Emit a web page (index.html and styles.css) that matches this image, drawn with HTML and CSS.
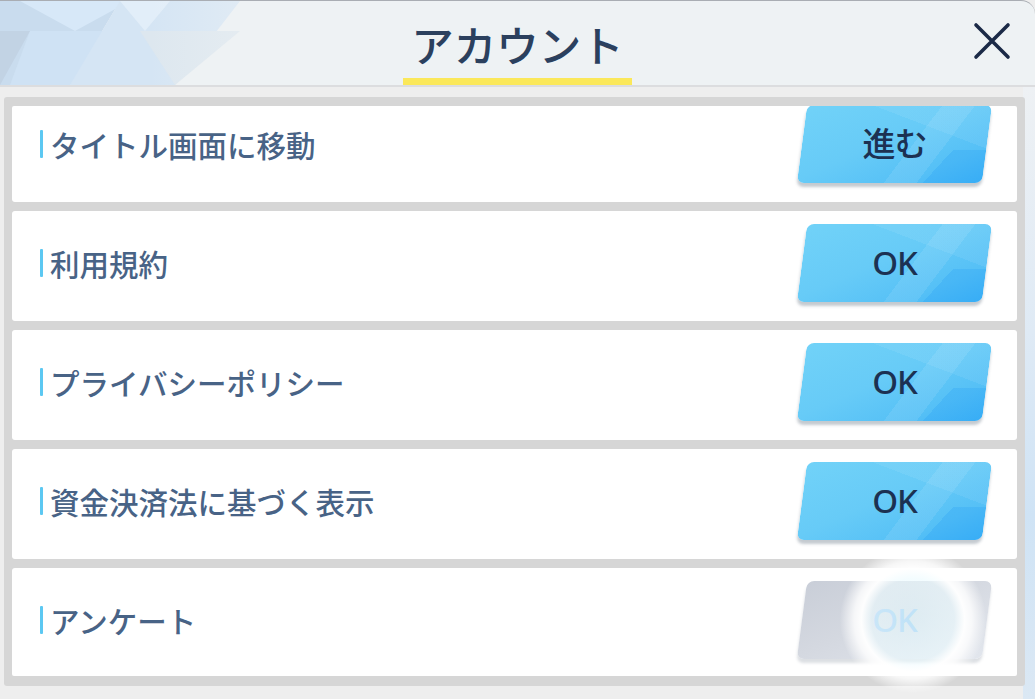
FILE: index.html
```html
<!DOCTYPE html>
<html lang="ja">
<head>
<meta charset="utf-8">
<link rel="stylesheet" href="styles.css">
</head>
<body>
<div class="screen">
  <header class="header">
    <svg class="header-deco" width="360" height="84" viewBox="0 0 360 84">
      <defs>
        <linearGradient id="fade" x1="0" y1="0" x2="1" y2="0">
          <stop offset="0" stop-color="#eef2f4" stop-opacity="0"/>
          <stop offset="1" stop-color="#eef2f4" stop-opacity="1"/>
        </linearGradient>
      </defs>
      <polygon points="0,0 120,0 70,84 0,84" fill="#c9dcee"/>
      <polygon points="20,0 130,0 75,30" fill="#d7e8f8"/>
      <polygon points="30,30 150,30 70,84 10,84" fill="#cfe2f4"/>
      <polygon points="120,0 240,0 175,84 70,84" fill="#d5e5f4"/>
      <polygon points="140,30 240,30 175,84" fill="#dde7ef"/>
      <polygon points="120,0 170,0 145,30" fill="#e2eef9"/>
      <polygon points="0,30 30,30 0,84" fill="#bfcfdf" opacity="0.7"/>
      <rect x="150" y="0" width="210" height="84" fill="url(#fade)"/>
    </svg>
    <h1 class="title">アカウント</h1>
    <button class="close" aria-label="閉じる">
      <svg width="40" height="40" viewBox="0 0 40 40">
        <path d="M4 4 L36 36 M36 4 L4 36" stroke="#1b2a47" stroke-width="3.6" stroke-linecap="round" fill="none"/>
      </svg>
    </button>
  </header>
  <main class="body">
    <div class="side-deco"></div>
    <section class="panel">
      <div class="viewport">
        <ul class="list">
          <li class="row">
            <span class="label">タイトル画面に移動</span>
            <button class="btn"><span class="btn-text">進む</span></button>
          </li>
          <li class="row">
            <span class="label">利用規約</span>
            <button class="btn"><span class="btn-text">OK</span></button>
          </li>
          <li class="row">
            <span class="label">プライバシーポリシー</span>
            <button class="btn"><span class="btn-text">OK</span></button>
          </li>
          <li class="row">
            <span class="label">資金決済法に基づく表示</span>
            <button class="btn"><span class="btn-text">OK</span></button>
          </li>
          <li class="row">
            <span class="label">アンケート</span>
            <button class="btn btn-disabled"><span class="btn-text">OK</span></button>
          </li>
        </ul>
      </div>
    </section>
    <span class="glow"></span>
  </main>
</div>
</body>
</html>
```
FILE: styles.css
```css
* { box-sizing: border-box; }
html, body {
  margin: 0;
  padding: 0;
}
body {
  width: 1035px;
  height: 699px;
  overflow: hidden;
  background: #eeeeee;
  font-family: "Noto Sans CJK JP", "Noto Sans", sans-serif;
}
.screen {
  width: 1035px;
  height: 699px;
  display: flex;
  flex-direction: column;
}
.header {
  position: relative;
  height: 87px;
  flex: none;
  background: #eef2f4;
  border-top: 1px solid #a9adb3;
  border-bottom: 2px solid #dcdddf;
  border-top-right-radius: 14px;
  display: flex;
  justify-content: center;
  align-items: flex-start;
}
.header-deco {
  position: absolute;
  left: 0;
  top: 0;
}
.title {
  position: relative;
  margin: 10px 0 0;
  padding: 0 8px;
  height: 74px;
  font-size: 42.5px;
  line-height: 66px;
  font-weight: 500;
  color: #2b405e;
  border-bottom: 7px solid #fbe85a;
}
.close {
  position: absolute;
  right: 23px;
  top: 20px;
  width: 40px;
  height: 40px;
  padding: 0;
  border: 0;
  background: none;
}
.body {
  position: relative;
  flex: 1;
  padding: 10px 10px 12px 4px;
  background: #eeeeee;
}
.side-deco {
  position: absolute;
  right: 0;
  top: 0;
  bottom: 0;
  width: 12px;
  background: linear-gradient(180deg, #eef1f4 0%, #dfeaf5 40%, #cfe3f5 70%, #dbe8f4 100%);
}
.panel {
  position: relative;
  height: 589px;
  background: #d6d6d6;
  border-radius: 3px;
  padding: 9px 8px 10px 8px;
}
.viewport {
  height: 570px;
  overflow: hidden;
  border-radius: 2px;
}
.list {
  list-style: none;
  margin: -14px 0 0;
  padding: 0;
  display: flex;
  flex-direction: column;
  gap: 9px;
}
.row {
  position: relative;
  height: 110px;
  flex: none;
  background: #ffffff;
  border-radius: 3px;
  display: flex;
  align-items: center;
  justify-content: space-between;
  padding: 0 30px 7px 28px;
}
.label {
  display: flex;
  align-items: center;
  gap: 7px;
  font-size: 29.5px;
  font-weight: 500;
  color: #486386;
  line-height: 40px;
}
.label::before {
  content: "";
  width: 3px;
  height: 28px;
  background: #5cc8f2;
  border-radius: 1px;
}
.btn {
  position: relative;
  width: 185px;
  height: 78px;
  border: 0;
  padding: 0;
  transform: skewX(-7.5deg);
  border-radius: 7px;
  overflow: hidden;
  background:
    linear-gradient(122deg, rgba(255,255,255,0) 58%, rgba(255,255,255,0.09) 58%, rgba(255,255,255,0.09) 72%, rgba(255,255,255,0) 72%),
    linear-gradient(200deg, rgba(255,255,255,0.07) 30%, rgba(255,255,255,0) 30%),
    linear-gradient(155deg, #71d2f8 0%, #67cbf7 45%, #55c0f6 78%, #3db2f6 100%);
  box-shadow: 0 4px 3px rgba(60, 80, 100, 0.3);
  font-family: "Noto Sans", "Noto Sans CJK JP", sans-serif;
}
.btn::before {
  content: "";
  position: absolute;
  left: 0;
  right: 0;
  bottom: 0;
  height: 42%;
  background: linear-gradient(128deg, rgba(255,255,255,0) 72%, rgba(40,160,245,0.28) 72%);
}
.btn-text {
  position: relative;
  display: block;
  transform: skewX(7.5deg);
  font-size: 33px;
  font-weight: 500;
  color: #1c3152;
  line-height: 78px;
  letter-spacing: -1px;
}
.btn-disabled {
  background: linear-gradient(155deg, #c9ced8 0%, #d4d8e0 45%, #e2e6ed 100%);
  box-shadow: 0 4px 3px rgba(60, 80, 100, 0.18);
}
.btn-disabled::before {
  background: none;
}
.btn-disabled .btn-text {
  color: #92c4ee;
}
.glow {
  position: absolute;
  left: 840px;
  top: 460px;
  width: 146px;
  height: 146px;
  border-radius: 50%;
  background: radial-gradient(circle at 50% 50%, rgba(228,250,255,0.55) 0%, rgba(236,251,255,0.62) 40%, rgba(255,255,255,0.97) 50%, rgba(255,255,255,0.8) 57%, rgba(255,255,255,0) 71%);
  pointer-events: none;
}
```
